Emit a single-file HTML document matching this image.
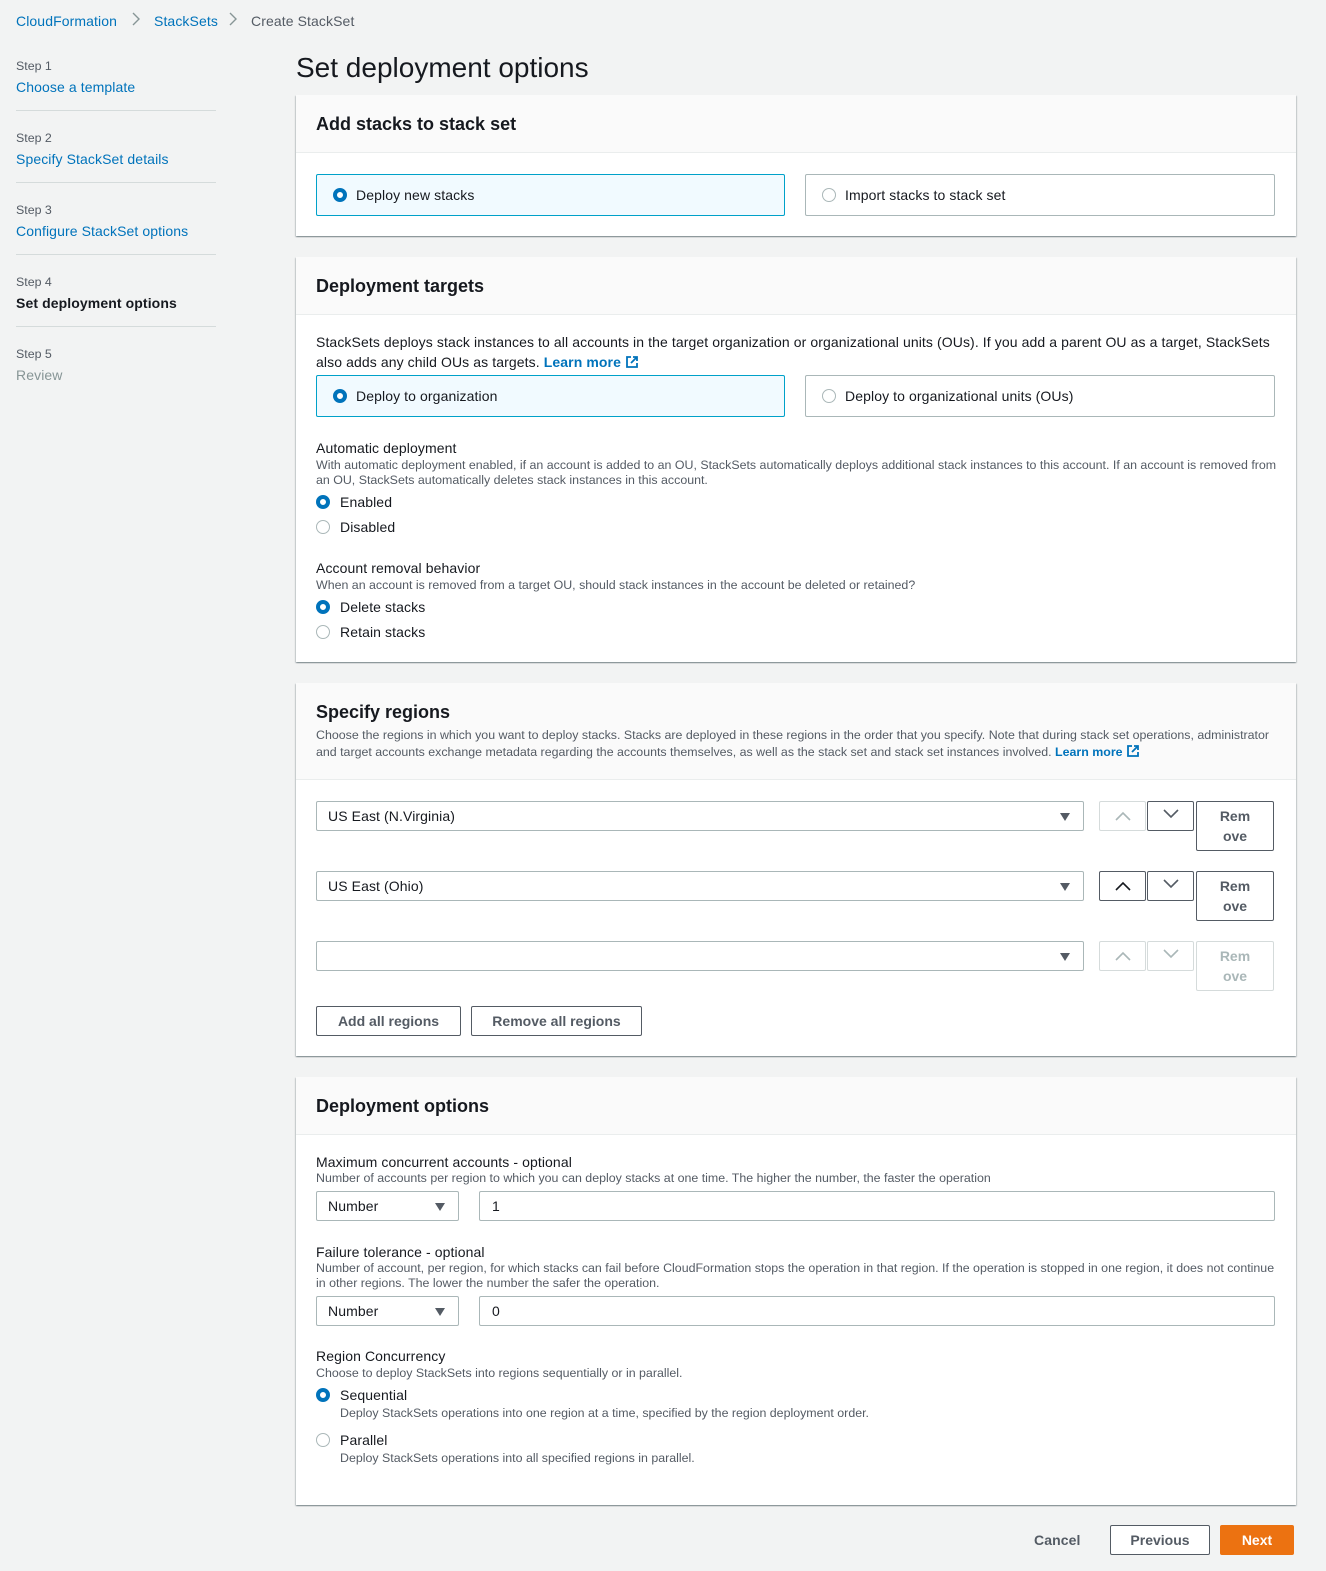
<!DOCTYPE html>
<html><head><meta charset="utf-8"><style>
*{box-sizing:border-box;margin:0;padding:0}
body{width:1326px;height:1571px;background:#f2f3f3;font-family:"Liberation Sans",sans-serif;color:#16191f;position:relative;overflow:hidden}
.a{position:absolute;white-space:nowrap}
.lnk{color:#0073bb}
.s{font-size:12.4px;color:#545b64;margin-top:1px}
.m{font-size:14px;letter-spacing:0.1px;margin-top:2px}
.panel{position:absolute;left:296px;width:1000px;background:#fff;box-shadow:0 1px 1px 0 rgba(0,28,36,.3),1px 1px 1px 0 rgba(0,28,36,.15),-1px 1px 1px 0 rgba(0,28,36,.15)}
.ph{position:absolute;left:0;top:0;width:100%;background:#fafafa;border-bottom:1px solid #eaeded}
.h2{position:absolute;left:20px;font-size:18px;font-weight:bold;margin-top:1px}
.tile{position:absolute;height:42px;border:1px solid #aab7b8;border-radius:2px;background:#fff}
.tile.sel{border-color:#00a1c9;background:#f1faff}
.rad{position:absolute;width:14px;height:14px;border-radius:50%;border:1px solid #aab7b8;background:#fff}
.rad.on{border:4px solid #0073bb}
.sel2{position:absolute;height:30px;border:1px solid #aab7b8;border-radius:2px;background:#fff}
.tri{position:absolute;width:0;height:0;border-left:5px solid transparent;border-right:5px solid transparent;border-top:8px solid #545b64}
.btn{position:absolute;border:1px solid #545b64;border-radius:2px;background:#fff;font-weight:bold;font-size:14px;color:#545b64;text-align:center}
.btn.d{border-color:#d5dbdb;color:#aab7b8}
.sep{position:absolute;left:16px;width:200px;height:1px;background:#d5dbdb}
</style></head><body>
<div class="a m lnk" style="left:16px;top:11px">CloudFormation</div>
<svg class="a" style="left:131px;top:12px" width="10" height="14"><path d="M2 1l6 6-6 6" stroke="#879596" stroke-width="1.4" fill="none"/></svg>
<div class="a m lnk" style="left:154px;top:11px">StackSets</div>
<svg class="a" style="left:228px;top:12px" width="10" height="14"><path d="M2 1l6 6-6 6" stroke="#879596" stroke-width="1.4" fill="none"/></svg>
<div class="a m" style="left:251px;top:11px;color:#545b64">Create StackSet</div>

<div class="a s" style="left:16px;top:58px">Step 1</div>
<div class="a m lnk" style="left:16px;top:77px">Choose a template</div>
<div class="sep" style="top:110px"></div>
<div class="a s" style="left:16px;top:130px">Step 2</div>
<div class="a m lnk" style="left:16px;top:149px">Specify StackSet details</div>
<div class="sep" style="top:182px"></div>
<div class="a s" style="left:16px;top:202px">Step 3</div>
<div class="a m lnk" style="left:16px;top:221px">Configure StackSet options</div>
<div class="sep" style="top:254px"></div>
<div class="a s" style="left:16px;top:274px">Step 4</div>
<div class="a m" style="left:16px;top:293px;font-weight:bold">Set deployment options</div>
<div class="sep" style="top:326px"></div>
<div class="a s" style="left:16px;top:346px">Step 5</div>
<div class="a m" style="left:16px;top:365px;color:#879596">Review</div>

<div class="a" style="left:296px;top:52px;font-size:28px">Set deployment options</div>

<!-- Panel 1 -->
<div class="panel" style="top:95px;height:141px">
<div class="ph" style="height:58px"><div class="h2" style="top:18px">Add stacks to stack set</div></div>
<div class="tile sel" style="left:20px;top:79px;width:469px"><div class="rad on" style="left:16px;top:13px"></div><div class="a m" style="left:39px;top:10px">Deploy new stacks</div></div>
<div class="tile" style="left:509px;top:79px;width:470px"><div class="rad" style="left:16px;top:13px"></div><div class="a m" style="left:39px;top:10px">Import stacks to stack set</div></div>
</div>

<!-- Panel 2 -->
<div class="panel" style="top:257px;height:405px">
<div class="ph" style="height:58px"><div class="h2" style="top:18px">Deployment targets</div></div>
<div class="a m" style="left:20px;top:75px">StackSets deploys stack instances to all accounts in the target organization or organizational units (OUs). If you add a parent OU as a target, StackSets</div>
<div class="a m" style="left:20px;top:95px">also adds any child OUs as targets. <b class="lnk">Learn more</b> <svg width="14" height="14" style="vertical-align:-2px"><path d="M6 2H2v10h10V8M8 2h4v4M12 2L6 8" stroke="#0073bb" stroke-width="1.8" fill="none"/></svg></div>
<div class="tile sel" style="left:20px;top:118px;width:469px"><div class="rad on" style="left:16px;top:13px"></div><div class="a m" style="left:39px;top:10px">Deploy to organization</div></div>
<div class="tile" style="left:509px;top:118px;width:470px"><div class="rad" style="left:16px;top:13px"></div><div class="a m" style="left:39px;top:10px">Deploy to organizational units (OUs)</div></div>
<div class="a m" style="left:20px;top:181px">Automatic deployment</div>
<div class="a s" style="left:20px;top:200px">With automatic deployment enabled, if an account is added to an OU, StackSets automatically deploys additional stack instances to this account. If an account is removed from</div>
<div class="a s" style="left:20px;top:215px">an OU, StackSets automatically deletes stack instances in this account.</div>
<div class="rad on" style="left:20px;top:238px"></div><div class="a m" style="left:44px;top:235px">Enabled</div>
<div class="rad" style="left:20px;top:263px"></div><div class="a m" style="left:44px;top:260px">Disabled</div>
<div class="a m" style="left:20px;top:301px">Account removal behavior</div>
<div class="a s" style="left:20px;top:320px">When an account is removed from a target OU, should stack instances in the account be deleted or retained?</div>
<div class="rad on" style="left:20px;top:343px"></div><div class="a m" style="left:44px;top:340px">Delete stacks</div>
<div class="rad" style="left:20px;top:368px"></div><div class="a m" style="left:44px;top:365px">Retain stacks</div>
</div>

<!-- Panel 3 -->
<div class="panel" style="top:683px;height:373px">
<div class="ph" style="height:97px"><div class="h2" style="top:18px">Specify regions</div>
<div class="a s" style="left:20px;top:44px">Choose the regions in which you want to deploy stacks. Stacks are deployed in these regions in the order that you specify. Note that during stack set operations, administrator</div>
<div class="a s" style="left:20px;top:60px">and target accounts exchange metadata regarding the accounts themselves, as well as the stack set and stack set instances involved. <b class="lnk">Learn more</b> <svg width="14" height="14" style="vertical-align:-2px"><path d="M6 2H2v10h10V8M8 2h4v4M12 2L6 8" stroke="#0073bb" stroke-width="1.8" fill="none"/></svg></div>
</div>
<div class="sel2" style="left:20px;top:118px;width:768px"><div class="a m" style="left:11px;top:4px">US East (N.Virginia)</div><div class="tri" style="left:743px;top:11px"></div></div>
<div class="btn d" style="left:803px;top:118px;width:47px;height:30px"><svg width="20" height="12" style="margin-top:8px"><path d="M3 10l7-7 7 7" stroke="#aab7b8" stroke-width="1.6" fill="none"/></svg></div>
<div class="btn" style="left:851px;top:118px;width:47px;height:30px"><svg width="20" height="12" style="margin-top:6px"><path d="M3 2l7 7 7-7" stroke="#545b64" stroke-width="1.6" fill="none"/></svg></div>
<div class="btn" style="left:900px;top:118px;width:78px;height:50px;line-height:20px;padding-top:4px">Rem<br>ove</div>
<div class="sel2" style="left:20px;top:188px;width:768px"><div class="a m" style="left:11px;top:4px">US East (Ohio)</div><div class="tri" style="left:743px;top:11px"></div></div>
<div class="btn" style="left:803px;top:188px;width:47px;height:30px"><svg width="20" height="12" style="margin-top:8px"><path d="M3 10l7-7 7 7" stroke="#16191f" stroke-width="1.6" fill="none"/></svg></div>
<div class="btn" style="left:851px;top:188px;width:47px;height:30px"><svg width="20" height="12" style="margin-top:6px"><path d="M3 2l7 7 7-7" stroke="#545b64" stroke-width="1.6" fill="none"/></svg></div>
<div class="btn" style="left:900px;top:188px;width:78px;height:50px;line-height:20px;padding-top:4px">Rem<br>ove</div>
<div class="sel2" style="left:20px;top:258px;width:768px"><div class="tri" style="left:743px;top:11px"></div></div>
<div class="btn d" style="left:803px;top:258px;width:47px;height:30px"><svg width="20" height="12" style="margin-top:8px"><path d="M3 10l7-7 7 7" stroke="#aab7b8" stroke-width="1.6" fill="none"/></svg></div>
<div class="btn d" style="left:851px;top:258px;width:47px;height:30px"><svg width="20" height="12" style="margin-top:6px"><path d="M3 2l7 7 7-7" stroke="#aab7b8" stroke-width="1.6" fill="none"/></svg></div>
<div class="btn d" style="left:900px;top:258px;width:78px;height:50px;line-height:20px;padding-top:4px">Rem<br>ove</div>
<div class="btn" style="left:20px;top:323px;width:145px;height:30px;line-height:28px">Add all regions</div>
<div class="btn" style="left:175px;top:323px;width:171px;height:30px;line-height:28px">Remove all regions</div>
</div>

<!-- Panel 4 -->
<div class="panel" style="top:1077px;height:428px">
<div class="ph" style="height:58px"><div class="h2" style="top:18px">Deployment options</div></div>
<div class="a m" style="left:20px;top:75px">Maximum concurrent accounts - optional</div>
<div class="a s" style="left:20px;top:93px">Number of accounts per region to which you can deploy stacks at one time. The higher the number, the faster the operation</div>
<div class="sel2" style="left:20px;top:114px;width:143px"><div class="a m" style="left:11px;top:4px">Number</div><div class="tri" style="left:118px;top:11px"></div></div>
<div class="sel2" style="left:183px;top:114px;width:796px"><div class="a m" style="left:12px;top:4px">1</div></div>
<div class="a m" style="left:20px;top:165px">Failure tolerance - optional</div>
<div class="a s" style="left:20px;top:183px">Number of account, per region, for which stacks can fail before CloudFormation stops the operation in that region. If the operation is stopped in one region, it does not continue</div>
<div class="a s" style="left:20px;top:198px">in other regions. The lower the number the safer the operation.</div>
<div class="sel2" style="left:20px;top:219px;width:143px"><div class="a m" style="left:11px;top:4px">Number</div><div class="tri" style="left:118px;top:11px"></div></div>
<div class="sel2" style="left:183px;top:219px;width:796px"><div class="a m" style="left:12px;top:4px">0</div></div>
<div class="a m" style="left:20px;top:269px">Region Concurrency</div>
<div class="a s" style="left:20px;top:288px">Choose to deploy StackSets into regions sequentially or in parallel.</div>
<div class="rad on" style="left:20px;top:311px"></div><div class="a m" style="left:44px;top:308px">Sequential</div>
<div class="a s" style="left:44px;top:328px">Deploy StackSets operations into one region at a time, specified by the region deployment order.</div>
<div class="rad" style="left:20px;top:356px"></div><div class="a m" style="left:44px;top:353px">Parallel</div>
<div class="a s" style="left:44px;top:373px">Deploy StackSets operations into all specified regions in parallel.</div>
</div>

<div class="a m" style="left:1034px;top:1530px;font-weight:bold;color:#545b64">Cancel</div>
<div class="btn" style="left:1110px;top:1525px;width:100px;height:30px;line-height:28px">Previous</div>
<div class="btn" style="left:1220px;top:1525px;width:74px;height:30px;line-height:28px;background:#ec7211;border-color:#ec7211;color:#fff">Next</div>
</body></html>
